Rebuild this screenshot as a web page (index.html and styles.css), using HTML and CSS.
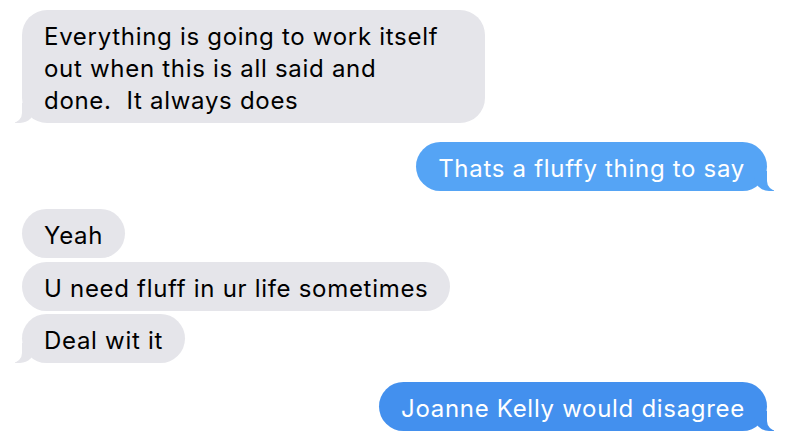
FILE: index.html
```html
<!DOCTYPE html>
<html>
<head>
<meta charset="utf-8">
<link rel="stylesheet" href="styles.css">
</head>
<body>
<div class="chat">
  <div class="msg in tail wide">Everything is going to work itself<br>out when this is all said and<br>done.&nbsp; It always does</div>
  <div class="msg out tail light gap">Thats a fluffy thing to say</div>
  <div class="msg in gap-s">Yeah</div>
  <div class="msg in near">U need fluff in ur life sometimes</div>
  <div class="msg in tail near">Deal wit it</div>
  <div class="msg out tail dark gap">Joanne Kelly would disagree</div>
</div>
</body>
</html>
```
FILE: styles.css
```css
html, body {
  margin: 0;
  padding: 0;
  background: #ffffff;
}
.chat {
  display: flex;
  flex-direction: column;
  padding: 10px 21px 0 22px;
  font-family: Inter, "Liberation Sans", sans-serif;
  font-size: 24px;
  letter-spacing: 0.7px;
  line-height: 32px;
}
.msg {
  position: relative;
  box-sizing: border-box;
  width: fit-content;
  max-width: 463px;
  padding: 11px 22px 6px 22px;
  border-radius: 25px;
  white-space: nowrap;
}
.gap { margin-top: 19px; }
.gap-s { margin-top: 18px; }
.near { margin-top: 3.5px; }
.wide { width: 463px; }
.in {
  align-self: flex-start;
  background: #e5e5ea;
  color: #000;
}
.out {
  align-self: flex-end;
  color: #fff;
}
.out.light { background: #55a4f5; }
.out.dark { background: #4390ee; }

.tail.in::before {
  content: "";
  position: absolute;
  bottom: 0;
  left: -7px;
  width: 20px;
  height: 20px;
  background: #e5e5ea;
  border-bottom-right-radius: 15px;
}
.tail.in::after {
  content: "";
  position: absolute;
  bottom: 0;
  left: -10px;
  width: 10px;
  height: 20px;
  background: #fff;
  border-bottom-right-radius: 10px;
}
.tail.out::before {
  content: "";
  position: absolute;
  bottom: 0;
  right: -7px;
  width: 20px;
  height: 20px;
  background: inherit;
  border-bottom-left-radius: 15px;
}
.tail.out::after {
  content: "";
  position: absolute;
  bottom: 0;
  right: -10px;
  width: 10px;
  height: 20px;
  background: #fff;
  border-bottom-left-radius: 10px;
}
```
